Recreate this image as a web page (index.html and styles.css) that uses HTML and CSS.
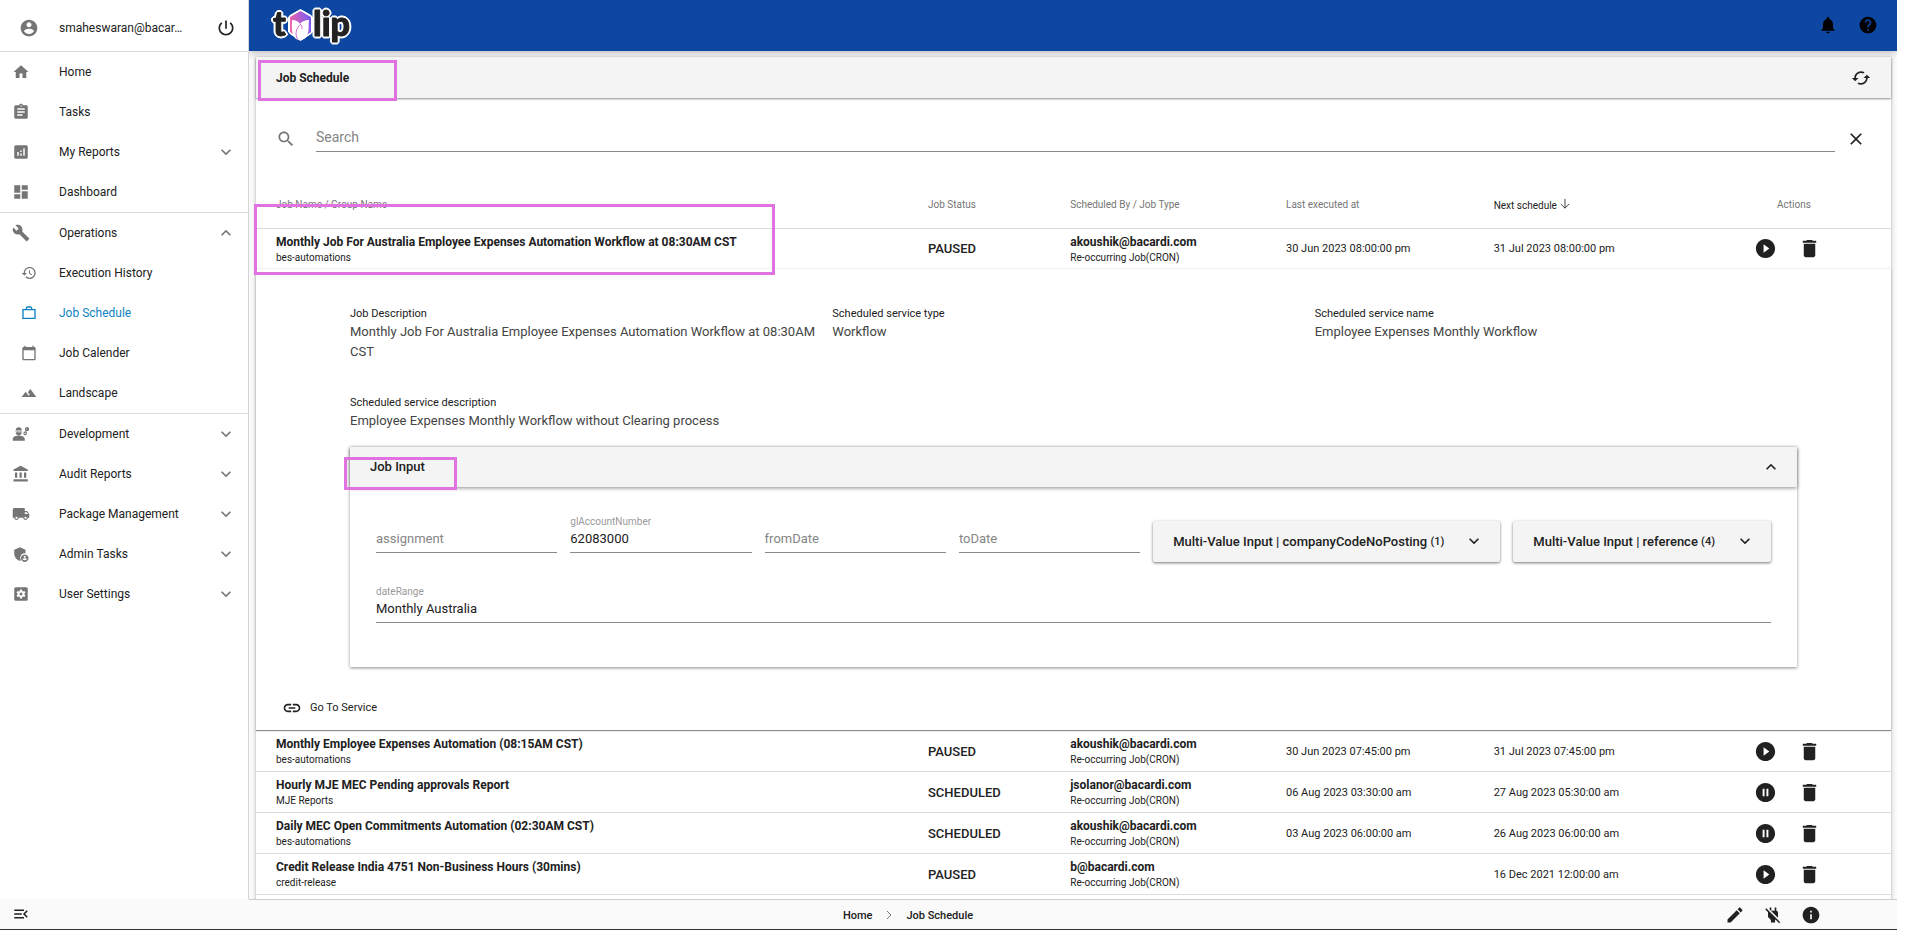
FILE: index.html
```html
<!DOCTYPE html>
<html lang="en">
<head>
  <meta charset="UTF-8">
  <title>Job Schedule</title>
  <link rel="stylesheet" href="styles.css">
</head>
<body>
  <!-- shared icons -->
  <svg class="defs" width="0" height="0">
    <symbol id="down" viewBox="0 0 24 24"><path d="M16.59 8.59L12 13.17 7.41 8.59 6 10l6 6 6-6z"/></symbol>
    <symbol id="up" viewBox="0 0 24 24"><path d="M12 8l-6 6 1.41 1.41L12 10.83l4.59 4.58L18 14z"/></symbol>
    <symbol id="play" viewBox="0 0 24 24"><path d="M12 2C6.48 2 2 6.48 2 12s4.48 10 10 10 10-4.48 10-10S17.52 2 12 2zm-2 14.5v-9l6 4.5-6 4.5z"/></symbol>
    <symbol id="pause" viewBox="0 0 24 24"><path d="M12 2C6.48 2 2 6.48 2 12s4.48 10 10 10 10-4.48 10-10S17.52 2 12 2zm-1 14H9V8h2v8zm4 0h-2V8h2v8z"/></symbol>
    <symbol id="trash" viewBox="0 0 24 24"><path d="M6 19c0 1.1.9 2 2 2h8c1.1 0 2-.9 2-2V7H6v12zM19 4h-3.5l-1-1h-5l-1 1H5v2h14V4z"/></symbol>
  </svg>

  <div class="app">
    <div class="body">
      <aside class="sidebar">
        <div class="user">
          <svg class="icon grey" viewBox="0 0 24 24"><path d="M12 2C6.48 2 2 6.48 2 12s4.48 10 10 10 10-4.48 10-10S17.52 2 12 2zm0 3c1.66 0 3 1.34 3 3s-1.34 3-3 3-3-1.34-3-3 1.34-3 3-3zm0 14.2c-2.5 0-4.71-1.28-6-3.22.03-1.99 4-3.08 6-3.08 1.99 0 5.97 1.09 6 3.08-1.29 1.94-3.5 3.22-6 3.22z"/></svg>
          <span class="user-name">smaheswaran@bacar…</span>
          <button class="icon-btn" aria-label="Log out"><svg class="icon" viewBox="0 0 24 24"><path d="M13 3h-2v10h2V3zm4.83 2.17l-1.42 1.42C17.99 7.86 19 9.81 19 12c0 3.87-3.13 7-7 7s-7-3.13-7-7c0-2.19 1.01-4.14 2.58-5.42L6.17 5.17C4.23 6.82 3 9.26 3 12c0 4.97 4.03 9 9 9s9-4.03 9-9c0-2.74-1.23-5.18-3.17-6.83z"/></svg></button>
        </div>

        <nav>
          <div class="group">
            <a class="item" href="#"><svg class="icon small" viewBox="0 0 24 24"><path d="M10 20v-6h4v6h5v-8h3L12 3 2 12h3v8z"/></svg><span>Home</span></a>
            <a class="item" href="#"><svg class="icon small" viewBox="0 0 24 24"><path d="M19 3h-4.18C14.4 1.84 13.3 1 12 1c-1.3 0-2.4.84-2.82 2H5c-1.1 0-2 .9-2 2v14c0 1.1.9 2 2 2h14c1.1 0 2-.9 2-2V5c0-1.1-.9-2-2-2zm-7 0c.55 0 1 .45 1 1s-.45 1-1 1-1-.45-1-1 .45-1 1-1zm2 14H7v-2h7v2zm3-4H7v-2h10v2zm0-4H7V7h10v2z"/></svg><span>Tasks</span></a>
            <a class="item" href="#"><svg class="icon small" viewBox="0 0 24 24"><path fill-rule="evenodd" d="M5 3h14a2 2 0 0 1 2 2v14a2 2 0 0 1-2 2H5a2 2 0 0 1-2-2V5a2 2 0 0 1 2-2zM7 12v5h2v-5zM11 10v2h2v-2zM11 14v3h2v-3zM15 7v10h2V7z"/></svg><span>My Reports</span><svg class="icon chev"><use href="#down"/></svg></a>
            <a class="item" href="#"><svg class="icon small" viewBox="0 0 24 24"><path d="M3 13h8V3H3v10zm0 8h8v-6H3v6zm10 0h8V11h-8v10zm0-18v6h8V3h-8z"/></svg><span>Dashboard</span></a>
          </div>
          <div class="group">
            <a class="item" href="#"><svg class="icon small" viewBox="0 0 24 24"><path d="M22.7 19l-9.1-9.1c.9-2.3.4-5-1.5-6.9-2-2-5-2.4-7.4-1.3L9 6 6 9 1.6 4.7C.4 7.1.9 10.1 2.9 12.1c1.9 1.9 4.6 2.4 6.9 1.5l9.1 9.1c.4.4 1 .4 1.4 0l2.3-2.3c.5-.4.5-1.1.1-1.4z"/></svg><span>Operations</span><svg class="icon chev"><use href="#up"/></svg></a>
            <a class="item sub" href="#"><svg class="icon tiny" viewBox="0 0 24 24"><path d="M13 3c-4.97 0-9 4.03-9 9H1l3.89 3.89.07.14L9 12H6c0-3.87 3.13-7 7-7s7 3.13 7 7-3.13 7-7 7c-1.93 0-3.68-.79-4.94-2.06l-1.42 1.42C8.27 19.99 10.51 21 13 21c4.97 0 9-4.03 9-9s-4.03-9-9-9zm-1 5v5l4.28 2.54.72-1.21-3.5-2.08V8H12z"/></svg><span>Execution History</span></a>
            <a class="item sub active" href="#"><svg class="icon tiny" viewBox="0 0 24 24"><path fill-rule="evenodd" d="M22 6h-5V4l-2-2H9L7 4v2H2v15h20zM9 4h6v2H9zM4 8h16v11H4z"/></svg><span>Job Schedule</span></a>
            <a class="item sub" href="#"><svg class="icon tiny" viewBox="0 0 24 24"><path d="M20 3h-1V1h-2v2H7V1H5v2H4c-1.1 0-2 .9-2 2v16c0 1.1.9 2 2 2h16c1.1 0 2-.9 2-2V5c0-1.1-.9-2-2-2zm0 18H4V8h16v13z"/></svg><span>Job Calender</span></a>
            <a class="item sub" href="#"><svg class="icon tiny" viewBox="0 0 24 24"><path d="M14 6l-3.75 5 2.85 3.8-1.6 1.2L7 10l-6 8h22z"/></svg><span>Landscape</span></a>
          </div>
          <div class="group">
            <a class="item" href="#"><svg class="icon small" viewBox="0 0 24 24"><path d="M9 14c-3 0-8 1.5-8 4.5V21h16v-2.5c0-3-5-4.5-8-4.5zM4.5 7.5h9v1h-9zM5 9.5h8a4 4 0 0 1-8 0zM5 7a4 4 0 0 1 8 0z"/><path fill="none" stroke="#757575" stroke-width="1.5" d="M20 3.5a2 2 0 1 0 .1 0M17.5 9.5a1.7 1.7 0 1 0 .1 0M18 8.5l4-5"/></svg><span>Development</span><svg class="icon chev"><use href="#down"/></svg></a>
            <a class="item" href="#"><svg class="icon small" viewBox="0 0 24 24"><path d="M4 10v7h3v-7H4zm6 0v7h3v-7h-3zM2 22h19v-3H2v3zm14-12v7h3v-7h-3zM11.5 1L2 6v2h19V6l-9.5-5z"/></svg><span>Audit Reports</span><svg class="icon chev"><use href="#down"/></svg></a>
            <a class="item" href="#"><svg class="icon small" viewBox="0 0 24 24"><path d="M20 8h-3V4H3c-1.1 0-2 .9-2 2v11h2c0 1.66 1.34 3 3 3s3-1.34 3-3h6c0 1.66 1.34 3 3 3s3-1.34 3-3h2v-5l-3-4zM6 18.5c-.83 0-1.5-.67-1.5-1.5s.67-1.5 1.5-1.5 1.5.67 1.5 1.5-.67 1.5-1.5 1.5zm13.5-9l1.96 2.5H17V9.5h2.5zm-1.5 9c-.83 0-1.5-.67-1.5-1.5s.67-1.5 1.5-1.5 1.5.67 1.5 1.5-.67 1.5-1.5 1.5z"/></svg><span>Package Management</span><svg class="icon chev"><use href="#down"/></svg></a>
            <a class="item" href="#"><svg class="icon small" viewBox="0 0 24 24"><path d="M17 11c.34 0 .67.04 1 .09V6.27L10.5 3 3 6.27v4.91c0 4.54 3.2 8.79 7.5 9.82.55-.13 1.08-.32 1.6-.55-.69-.98-1.1-2.17-1.1-3.45 0-3.31 2.69-6 6-6z"/><path fill-rule="evenodd" d="M17 12.5a5 5 0 1 0 .01 0zm0 1.7a1.4 1.4 0 1 1-.01 0zm-3 4.6c.6-1.3 5.4-1.3 6 0-1.5 2.2-4.5 2.2-6 0z"/></svg><span>Admin Tasks</span><svg class="icon chev"><use href="#down"/></svg></a>
            <a class="item" href="#"><svg class="icon small" viewBox="0 0 24 24"><path fill-rule="evenodd" d="M5 3h14a2 2 0 0 1 2 2v14a2 2 0 0 1-2 2H5a2 2 0 0 1-2-2V5a2 2 0 0 1 2-2zM10.7 6l-.3 1.9-1.2.7-1.8-.7L6 10.2l1.5 1.2v1.3L6 13.8l1.4 2.3 1.8-.7 1.2.7.3 1.9h2.6l.3-1.9 1.2-.7 1.8.7 1.4-2.3-1.5-1.2v-1.3L18 10.2l-1.4-2.3-1.8.7-1.2-.7-.3-1.9zM12 10a2 2 0 1 1-.01 0z"/></svg><span>User Settings</span><svg class="icon chev"><use href="#down"/></svg></a>
          </div>
        </nav>
      </aside>

      <div class="main">
        <header class="topbar">
          <a class="logo" href="#" aria-label="tulip">
            <svg width="90" height="46" viewBox="0 0 90 46">
              <defs>
                <linearGradient id="petal" x1="0" y1="0.6" x2="1" y2="0.4">
                  <stop offset="0" stop-color="#f062a8"/>
                  <stop offset="1" stop-color="#7a5cf0"/>
                </linearGradient>
              </defs>
              <g class="outlined">
                <text class="logo-text" x="7" y="34">t</text>
                <text class="logo-text" x="47" y="34">lip</text>
                <path fill="url(#petal)" d="M34.5 9L45 15v15l-10.5 7L24 30V15z"/>
              </g>
              <path fill="#fff" d="M26 18c4 0 7 2 8 4 1-2 5-4 9-4-1 6 1 12-3 17-3 4-8 4-11 1-4-5-3-12-3-18z"/>
              <path fill="none" stroke="#d070d0" d="M35 22c-6 5-6 11-3 16M34 22c2 1 2 3 2 5"/>
            </svg>
          </a>
          <button class="icon-btn" aria-label="Notifications"><svg class="icon" viewBox="0 0 24 24"><path d="M12 22c1.1 0 2-.9 2-2h-4c0 1.1.89 2 2 2zm6-6v-5c0-3.07-1.64-5.64-4.5-6.32V4c0-.83-.67-1.5-1.5-1.5s-1.5.67-1.5 1.5v.68C7.63 5.36 6 7.92 6 11v5l-2 2v1h16v-1l-2-2z"/></svg></button>
          <button class="icon-btn" aria-label="Help"><svg class="icon" viewBox="0 0 24 24"><path d="M12 2C6.48 2 2 6.48 2 12s4.48 10 10 10 10-4.48 10-10S17.52 2 12 2zm1 17h-2v-2h2v2zm2.07-7.75l-.9.92C13.45 12.9 13 13.5 13 15h-2v-.5c0-1.1.45-2.1 1.17-2.83l1.24-1.26c.37-.36.59-.86.59-1.41 0-1.1-.9-2-2-2s-2 .9-2 2H8c0-2.21 1.79-4 4-4s4 1.79 4 4c0 .88-.36 1.68-.93 2.25z"/></svg></button>
        </header>

        <section class="card">
          <div class="card-head">
            <h1>Job Schedule</h1>
            <button class="icon-btn" aria-label="Refresh"><svg class="icon" viewBox="0 0 24 24"><path d="M19 8l-4 4h3c0 3.31-2.69 6-6 6-1.01 0-1.97-.25-2.8-.7l-1.46 1.46C8.97 19.54 10.43 20 12 20c4.42 0 8-3.58 8-8h3l-4-4zM6 12c0-3.31 2.69-6 6-6 1.01 0 1.97.25 2.8.7l1.46-1.46C15.03 4.46 13.57 4 12 4c-4.42 0-8 3.58-8 8H1l4 4 4-4H6z"/></svg></button>
            <div class="mark mark-title"></div>
          </div>

          <div class="search">
            <svg class="icon grey" viewBox="0 0 24 24"><path d="M15.5 14h-.79l-.28-.27C15.41 12.59 16 11.11 16 9.5 16 5.91 13.09 3 9.5 3S3 5.91 3 9.5 5.91 16 9.5 16c1.61 0 3.09-.59 4.23-1.57l.27.28v.79l5 4.99L20.49 19l-4.99-5zm-6 0C7.01 14 5 11.99 5 9.5S7.01 5 9.5 5 14 7.01 14 9.5 11.99 14 9.5 14z"/></svg>
            <input class="line-input" type="text" placeholder="Search" aria-label="Search">
            <button class="icon-btn" aria-label="Clear search"><svg class="icon" viewBox="0 0 24 24"><path d="M19 6.41L17.59 5 12 10.59 6.41 5 5 6.41 10.59 12 5 17.59 6.41 19 12 13.41 17.59 19 19 17.59 13.41 12z"/></svg></button>
          </div>

          <div class="jobs-wrap">
            <table class="jobs">
              <colgroup>
                <col class="c-name"><col class="c-status"><col class="c-by"><col class="c-last"><col class="c-next"><col class="c-actions">
              </colgroup>
              <thead>
                <tr>
                  <th>Job Name / Group Name</th>
                  <th>Job Status</th>
                  <th>Scheduled By / Job Type</th>
                  <th>Last executed at</th>
                  <th class="sorted">Next schedule<svg class="sort" viewBox="0 0 12 12"><path fill="none" stroke="#212121" d="M6 0v11M1 6l5 5 5-5"/></svg></th>
                  <th class="act-head">Actions</th>
                </tr>
              </thead>
              <tbody>
                <tr class="open">
                  <td><div class="name">Monthly Job For Australia Employee Expenses Automation Workflow at 08:30AM CST</div><div class="sub-text">bes-automations</div></td>
                  <td class="status">PAUSED</td>
                  <td><div class="name">akoushik@bacardi.com</div><div class="sub-text">Re-occurring Job(CRON)</div></td>
                  <td>30 Jun 2023 08:00:00 pm</td>
                  <td>31 Jul 2023 08:00:00 pm</td>
                  <td><div class="actions"><button class="icon-btn" aria-label="Run"><svg class="icon big"><use href="#play"/></svg></button><button class="icon-btn" aria-label="Delete"><svg class="icon big"><use href="#trash"/></svg></button></div></td>
                </tr>
                <tr class="detail-row">
                  <td colspan="6">
                    <div class="detail">
                      <dl class="facts">
                        <div><dt>Job Description</dt><dd>Monthly Job For Australia Employee Expenses Automation Workflow at 08:30AM CST</dd></div>
                        <div><dt>Scheduled service type</dt><dd>Workflow</dd></div>
                        <div><dt>Scheduled service name</dt><dd>Employee Expenses Monthly Workflow</dd></div>
                        <div class="wide"><dt>Scheduled service description</dt><dd>Employee Expenses Monthly Workflow without Clearing process</dd></div>
                      </dl>

                      <section class="panel">
                        <div class="panel-head">
                          <h2>Job Input</h2>
                          <button class="icon-btn" aria-label="Collapse"><svg class="icon"><use href="#up"/></svg></button>
                          <div class="mark mark-input"></div>
                        </div>
                        <div class="fields">
                          <div class="field"><label for="assignment"></label><input class="line-input" id="assignment" type="text" placeholder="assignment" aria-label="assignment"></div>
                          <div class="field"><label for="gl">glAccountNumber</label><input class="line-input" id="gl" type="text" value="62083000"></div>
                          <div class="field"><label for="from"></label><input class="line-input" id="from" type="text" placeholder="fromDate" aria-label="fromDate"></div>
                          <div class="field"><label for="to"></label><input class="line-input" id="to" type="text" placeholder="toDate" aria-label="toDate"></div>
                          <button class="multi">Multi-Value Input | companyCodeNoPosting <small>(1)</small><svg class="icon"><use href="#down"/></svg></button>
                          <button class="multi">Multi-Value Input | reference <small>(4)</small><svg class="icon"><use href="#down"/></svg></button>
                        </div>
                        <div class="field range"><label for="range">dateRange</label><input class="line-input" id="range" type="text" value="Monthly Australia"></div>
                      </section>
                    </div>
                    <button class="service"><svg class="icon" viewBox="0 0 24 24"><path d="M3.9 12c0-1.71 1.39-3.1 3.1-3.1h4V7H7c-2.76 0-5 2.24-5 5s2.24 5 5 5h4v-1.9H7c-1.71 0-3.1-1.39-3.1-3.1zM8 13h8v-2H8v2zm9-6h-4v1.9h4c1.71 0 3.1 1.39 3.1 3.1s-1.39 3.1-3.1 3.1h-4V17h4c2.76 0 5-2.24 5-5s-2.24-5-5-5z"/></svg>Go To Service</button>
                  </td>
                </tr>
                <tr>
                  <td><div class="name">Monthly Employee Expenses Automation (08:15AM CST)</div><div class="sub-text">bes-automations</div></td>
                  <td class="status">PAUSED</td>
                  <td><div class="name">akoushik@bacardi.com</div><div class="sub-text">Re-occurring Job(CRON)</div></td>
                  <td>30 Jun 2023 07:45:00 pm</td>
                  <td>31 Jul 2023 07:45:00 pm</td>
                  <td><div class="actions"><button class="icon-btn" aria-label="Run"><svg class="icon big"><use href="#play"/></svg></button><button class="icon-btn" aria-label="Delete"><svg class="icon big"><use href="#trash"/></svg></button></div></td>
                </tr>
                <tr>
                  <td><div class="name">Hourly MJE MEC Pending approvals Report</div><div class="sub-text">MJE Reports</div></td>
                  <td class="status">SCHEDULED</td>
                  <td><div class="name">jsolanor@bacardi.com</div><div class="sub-text">Re-occurring Job(CRON)</div></td>
                  <td>06 Aug 2023 03:30:00 am</td>
                  <td>27 Aug 2023 05:30:00 am</td>
                  <td><div class="actions"><button class="icon-btn" aria-label="Pause"><svg class="icon big"><use href="#pause"/></svg></button><button class="icon-btn" aria-label="Delete"><svg class="icon big"><use href="#trash"/></svg></button></div></td>
                </tr>
                <tr>
                  <td><div class="name">Daily MEC Open Commitments Automation (02:30AM CST)</div><div class="sub-text">bes-automations</div></td>
                  <td class="status">SCHEDULED</td>
                  <td><div class="name">akoushik@bacardi.com</div><div class="sub-text">Re-occurring Job(CRON)</div></td>
                  <td>03 Aug 2023 06:00:00 am</td>
                  <td>26 Aug 2023 06:00:00 am</td>
                  <td><div class="actions"><button class="icon-btn" aria-label="Pause"><svg class="icon big"><use href="#pause"/></svg></button><button class="icon-btn" aria-label="Delete"><svg class="icon big"><use href="#trash"/></svg></button></div></td>
                </tr>
                <tr>
                  <td><div class="name">Credit Release India 4751 Non-Business Hours (30mins)</div><div class="sub-text">credit-release</div></td>
                  <td class="status">PAUSED</td>
                  <td><div class="name">b@bacardi.com</div><div class="sub-text">Re-occurring Job(CRON)</div></td>
                  <td></td>
                  <td>16 Dec 2021 12:00:00 am</td>
                  <td><div class="actions"><button class="icon-btn" aria-label="Run"><svg class="icon big"><use href="#play"/></svg></button><button class="icon-btn" aria-label="Delete"><svg class="icon big"><use href="#trash"/></svg></button></div></td>
                </tr>
              </tbody>
            </table>
            <div class="mark mark-job"></div>
          </div>
        </section>
      </div>
    </div>

    <footer class="footer">
      <div class="foot-side">
        <button class="icon-btn" aria-label="Toggle menu"><svg class="icon small" viewBox="0 0 24 24"><path d="M3 18h13v-2H3v2zM3 13h10v-2H3v2zm0-7v2h13V6H3zm18 9.59L17.42 12 21 8.41 19.59 7l-5 5 5 5L21 15.59z"/></svg></button>
      </div>
      <div class="foot-main">
        <div class="crumbs">
          <a href="#">Home</a>
          <svg width="6" height="10" viewBox="0 0 6 10"><path fill="none" stroke="#757575" d="M1 1l4 4-4 4"/></svg>
          <a href="#">Job Schedule</a>
        </div>
        <div class="foot-icons">
          <button class="icon-btn" aria-label="Edit"><svg class="icon" viewBox="0 0 24 24"><path d="M3 17.25V21h3.75L17.81 9.94l-3.75-3.75L3 17.25zM20.71 7.04c.39-.39.39-1.02 0-1.41l-2.34-2.34c-.39-.39-1.02-.39-1.41 0l-1.83 1.83 3.75 3.75 1.83-1.83z"/></svg></button>
          <button class="icon-btn" aria-label="Disconnect"><svg class="icon" viewBox="0 0 24 24"><path d="M18 14.49V9c0-1-1.01-2.01-2-2V3h-2v4h-4V3H8v2.48l9.51 9.5.49-.49zm-1.76 1.77L7.2 7.2l-.01.01L3.98 4 2.71 5.25l3.36 3.36C6.04 8.74 6 8.87 6 9v5.48L9.5 18v3h5v-3l.48-.48L19.45 22l1.26-1.28-4.47-4.46z"/></svg></button>
          <button class="icon-btn" aria-label="Info"><svg class="icon" viewBox="0 0 24 24"><path d="M12 2C6.48 2 2 6.48 2 12s4.48 10 10 10 10-4.48 10-10S17.52 2 12 2zm1 15h-2v-6h2v6zm0-8h-2V7h2v2z"/></svg></button>
        </div>
      </div>
    </footer>
  </div>
</body>
</html>
```
FILE: styles.css
```css
* {
  box-sizing: border-box;
}

body {
  margin: 0;
  font-family: Roboto, "Liberation Sans", sans-serif;
  font-size: 12px;
  color: #212121;
  background: white;
}

h1, h2, dl, dt, dd {
  margin: 0;
}

a {
  color: inherit;
  text-decoration: none;
}

button, input {
  font: inherit;
  color: inherit;
}

.defs {
  position: absolute;
}

.app {
  height: 100vh;
  padding: 0 18px 5px 0;
  display: flex;
  flex-direction: column;
}

.body {
  flex: 1;
  min-height: 0;
  display: flex;
}

.icon {
  width: 20px;
  height: 20px;
  flex: none;
  display: block;
  fill: currentColor;
}

.icon.small {
  width: 18px;
  height: 18px;
}

.icon.tiny {
  width: 16px;
  height: 16px;
}

.icon.big {
  width: 23px;
  height: 23px;
}

.grey {
  color: #757575;
}

.icon-btn {
  border: none;
  background: none;
  padding: 0;
  cursor: pointer;
}

/* sidebar */
.sidebar {
  width: 249px;
  flex: none;
  border-right: 1px solid #d5d5d5;
  background: white;
}

.user {
  height: 52px;
  padding: 4px 12px 0 19px;
  display: flex;
  align-items: center;
  border-bottom: 1px solid #dcdcdc;
}

.user-name {
  margin-left: 20px;
  white-space: nowrap;
}

.user .icon-btn {
  margin-left: auto;
}

.group + .group {
  border-top: 1px solid #dcdcdc;
}

.item {
  height: 40px;
  padding: 0 12px 0 8px;
  display: grid;
  grid-template-columns: 25px 1fr 20px;
  column-gap: 26px;
  align-items: center;
}

.item .icon {
  color: #757575;
  justify-self: center;
}

.item.sub {
  padding-left: 16px;
  column-gap: 18px;
}

.item.active,
.item.active .icon {
  color: #0d83c4;
}

/* main area */
.main {
  flex: 1;
  min-width: 0;
  overflow: hidden;
  background: #fafafa;
}

.topbar {
  height: 51px;
  padding: 0 19px 2px 17px;
  display: flex;
  align-items: center;
  gap: 20px;
  color: black;
  background: #0d47a1;
  box-shadow: 0 1px 8px rgba(0,0,0,0.3);
}

.logo {
  margin-right: auto;
}

.logo svg {
  display: block;
}

.logo-text {
  font-family: Lato, sans-serif;
  font-size: 34px;
  font-weight: 900;
  fill: #222;
  stroke: #222;
  stroke-linejoin: round;
}

.outlined {
  filter: drop-shadow(1px 1px 0 white) drop-shadow(-1px 1px 0 white) drop-shadow(1px -1px 0 white) drop-shadow(-1px -1px 0 white);
}

.card {
  margin: 6px 6px 0 7px;
  min-height: 100%;
  background: white;
  box-shadow: 0 1px 4px rgba(0,0,0,0.3);
}

.card-head {
  position: relative;
  height: 41px;
  padding: 0 20px;
  display: flex;
  align-items: center;
  justify-content: space-between;
  background: #f4f4f4;
  box-shadow: 0 1px 2px rgba(0,0,0,0.45);
}

.card-head h1 {
  font-size: 12px;
  font-weight: 700;
}

.panel-head h2 {
  font-size: 13px;
  font-weight: 500;
}

.search {
  padding: 28px 25px 0 20px;
  display: flex;
  align-items: center;
}

.search .line-input {
  flex: 1;
  margin: 0 11px 0 20px;
  font-size: 14px;
}

.line-input {
  display: block;
  min-width: 0;
  height: 26px;
  padding: 0 0 3px;
  border: none;
  border-bottom: 1px solid #8a8a8a;
  outline: none;
  background: none;
}

.line-input::placeholder {
  color: #858585;
}

/* jobs table */
.jobs-wrap {
  position: relative;
  margin-top: 28px;
}

.jobs {
  width: 100%;
  table-layout: fixed;
  border-collapse: collapse;
}

.c-name { width: 41.1%; }
.c-status { width: 8.7%; }
.c-by { width: 13.2%; }
.c-last { width: 12.7%; }
.c-next { width: 15.8%; }
.c-actions { width: 8.5%; }

.jobs th {
  height: 48px;
  padding: 2px 0 0;
  text-align: left;
  font-size: 10px;
  font-weight: 400;
  color: #757575;
  border-bottom: 1px solid #dcdcdc;
}

.jobs th.sorted {
  color: #212121;
}

.sort {
  width: 10px;
  height: 10px;
  margin-left: 3px;
}

.jobs th.act-head {
  padding-left: 25px;
}

.jobs td {
  height: 41px;
  padding: 1px 0 0;
  font-size: 11px;
  border-bottom: 1px solid #dcdcdc;
}

.jobs th:first-child,
.jobs td:first-child {
  padding-left: 20px;
}

.jobs .open td {
  height: 40px;
  border-bottom-color: #f2f2f2;
}

.jobs .name {
  padding-top: 2px;
  font-size: 12px;
  line-height: 16px;
  font-weight: 700;
}

.jobs .sub-text {
  font-size: 10px;
  line-height: 16px;
}

.jobs .status {
  font-size: 13px;
  font-weight: 500;
}

.actions {
  padding-left: 2px;
  display: flex;
  gap: 21px;
}

.jobs .detail-row td {
  padding: 37px 0 10px;
  border-bottom: 1px solid #8a8a8a;
  box-shadow: 0 1px 2px rgba(0,0,0,0.2);
}

.detail {
  padding: 0 94px;
}

.facts {
  display: grid;
  grid-template-columns: 1fr 1fr 1fr;
  row-gap: 33px;
  margin-bottom: 16px;
}

.facts dt {
  font-size: 11px;
  line-height: 16px;
}

.facts dd {
  font-size: 13px;
  line-height: 20px;
  color: #444;
}

.facts .wide {
  grid-column: 1 / -1;
}

.panel {
  padding-bottom: 44px;
  background: white;
  box-shadow: 0 1px 3px rgba(0,0,0,0.45);
}

.panel-head {
  position: relative;
  height: 40px;
  padding: 0 16px 0 20px;
  display: flex;
  align-items: center;
  justify-content: space-between;
  background: #f4f4f4;
  box-shadow: 0 1px 4px rgba(0,0,0,0.45);
}

.fields {
  padding: 29px 26px 0;
  display: flex;
  align-items: flex-start;
  gap: 13px;
}

.field {
  flex: 1;
  min-width: 0;
}

.field label {
  display: block;
  height: 12px;
  font-size: 10px;
  line-height: 12px;
  color: #9a9a9a;
}

.field .line-input {
  width: 100%;
  height: 25px;
  font-size: 13px;
}

.range {
  padding: 24px 26px 0;
}

.multi {
  height: 41px;
  padding: 0 16px 0 20px;
  margin-top: 5px;
  display: flex;
  align-items: center;
  white-space: pre;
  font-size: 13px;
  font-weight: 500;
  border: none;
  border-radius: 2px;
  background: #f4f4f4;
  box-shadow: 0 1px 3px rgba(0,0,0,0.55);
}

.multi small {
  font-size: 11px;
}

.multi .icon {
  margin-left: 20px;
}

.service {
  height: 24px;
  margin: 29px 0 0 26px;
  padding: 0;
  display: flex;
  align-items: center;
  gap: 8px;
  border: none;
  background: none;
}

/* highlight boxes */
.mark {
  position: absolute;
  border: 3px solid #e073e0;
  pointer-events: none;
}

.mark-title {
  left: 2px;
  top: 3px;
  width: 139px;
  height: 41px;
}

.mark-job {
  left: -2px;
  top: 24px;
  width: 521px;
  height: 71px;
}

.mark-input {
  left: -6px;
  top: 10px;
  width: 113px;
  height: 33px;
}

/* footer */
.footer {
  display: flex;
  height: 31px;
  background: #fafafa;
  border-bottom: 1px solid #333;
}

.foot-side {
  width: 249px;
  padding-left: 12px;
  display: flex;
  align-items: center;
}

.foot-main {
  flex: 1;
  padding: 1px 76px 0 0;
  display: grid;
  grid-template-columns: 36% auto 1fr;
  align-items: center;
  border-top: 1px solid #ccc;
}

.crumbs {
  grid-column: 2;
  padding-left: 28px;
  display: flex;
  align-items: center;
  gap: 14px;
  font-size: 11px;
  font-weight: 500;
}

.foot-icons {
  display: flex;
  justify-content: flex-end;
  gap: 18px;
}
```
